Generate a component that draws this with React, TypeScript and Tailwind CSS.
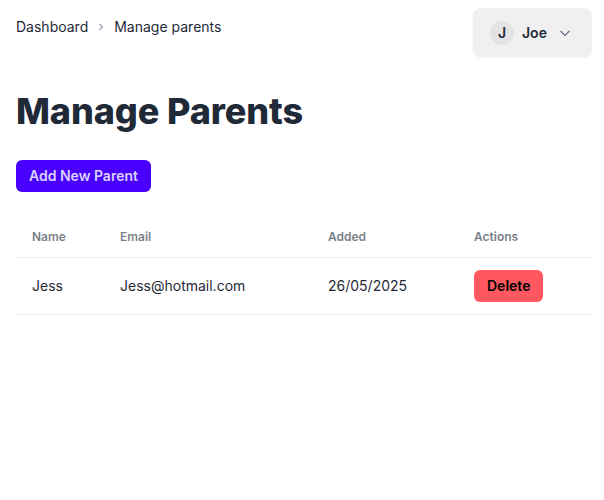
import React from 'react'

interface Parent {
  name: string;
  email: string;
  added: string;
}

const parents: Parent[] = [
  { name: "Jess", email: "Jess@hotmail.com", added: "26/05/2025" },
]

function App() {
  return (
    <div className="min-h-screen bg-white pl-4 pr-3 text-[#1f2937]" style={{ fontFamily: "Inter, 'Noto Sans', sans-serif" }}>
      <div className="flex items-start justify-between pt-2">
        <div className="flex items-center gap-[9px] pt-[9px] text-sm">
          <span>Dashboard</span>
          <svg width="8" height="10" viewBox="0 0 8 10" className="text-gray-400">
            <path d="M2.5 2 L5.5 5 L2.5 8" fill="none" stroke="currentColor" strokeWidth="1.2" />
          </svg>
          <span>Manage parents</span>
        </div>
        <button className="flex h-[49px] w-[119px] items-center rounded-lg bg-[#f0f0f0] pl-[17px] shadow-[0_1px_2px_rgba(0,0,0,0.04)]">
          <span className="flex h-6 w-6 items-center justify-center rounded-full bg-[#e3e3e3] text-sm font-semibold">J</span>
          <span className="ml-2 text-sm font-semibold">Joe</span>
          <svg width="14" height="14" viewBox="0 0 14 14" className="ml-[11px] text-gray-500">
            <path d="M2.5 5 L7 9.5 L11.5 5" fill="none" stroke="currentColor" strokeWidth="1.2" />
          </svg>
        </button>
      </div>

      <h1 className="mt-[34px] text-[36px] font-extrabold leading-[40px] tracking-[-0.1px]">Manage Parents</h1>

      <button className="mt-[29px] h-[32px] rounded-md bg-[#4a00ff] px-[13px] text-sm font-semibold text-[#d8d4ff]">
        Add New Parent
      </button>

      <table className="mt-[25px] w-full text-left text-sm">
        <thead>
          <tr className="border-b border-[#ececec] text-xs font-semibold text-[#7a7f87]">
            <th className="w-[88px] px-4 py-[12px] font-semibold">Name</th>
            <th className="w-[208px] px-4 font-semibold">Email</th>
            <th className="w-[146px] px-4 font-semibold">Added</th>
            <th className="px-4 font-semibold">Actions</th>
          </tr>
        </thead>
        <tbody>
          {parents.map((p) => (
            <tr key={p.email} className="border-b border-[#ececec]">
              <td className="px-4 py-3">{p.name}</td>
              <td className="px-4 py-3">{p.email}</td>
              <td className="px-4 py-3">{p.added}</td>
              <td className="px-4 py-3">
                <button className="block h-[32px] rounded-md bg-[#ff5861] px-[13px] text-sm font-semibold text-black">Delete</button>
              </td>
            </tr>
          ))}
        </tbody>
      </table>
    </div>
  )
}

export default App
